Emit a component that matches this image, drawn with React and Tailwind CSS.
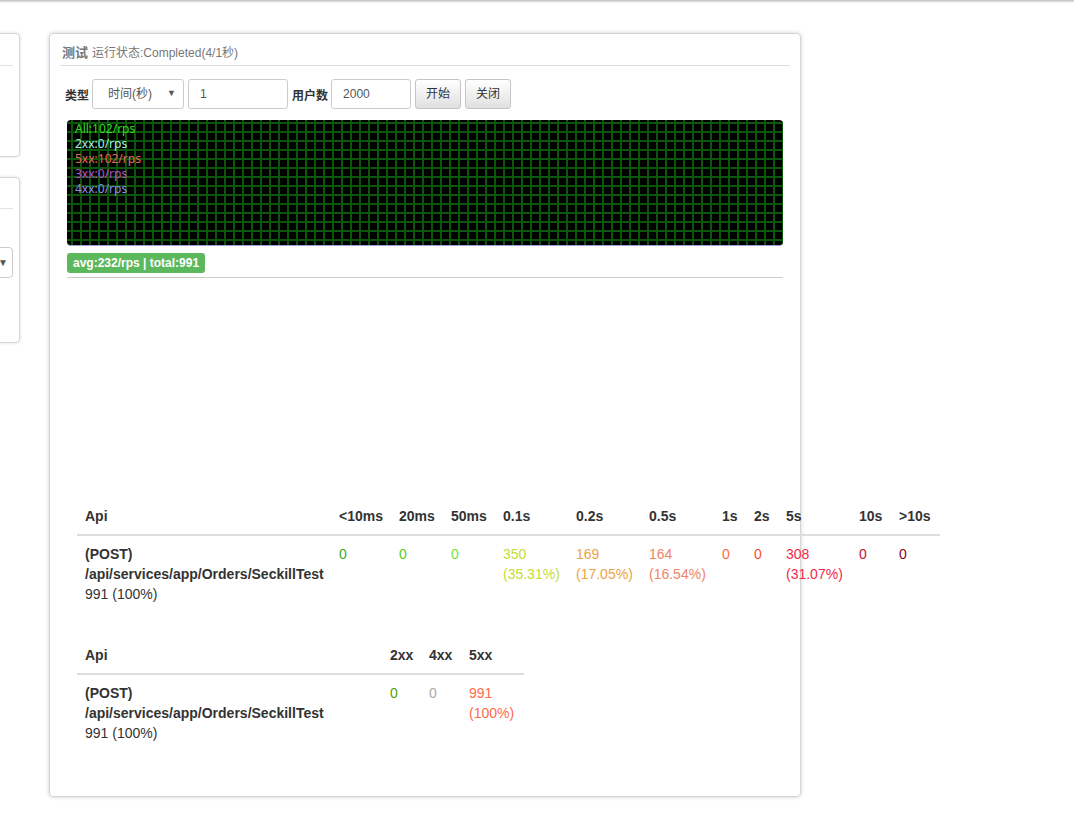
import React from "react";

const font = { fontFamily: '"Liberation Sans", Arial, "Noto Sans CJK SC", sans-serif' };
const chartFont = { fontFamily: '"Noto Sans", "Open Sans", sans-serif' };

const legend = [
  { label: "All:102/rps", color: "text-[#33dd22]" },
  { label: "2xx:0/rps", color: "text-[#a8eee0]" },
  { label: "5xx:102/rps", color: "text-[#e26a5a]" },
  { label: "3xx:0/rps", color: "text-[#b84cc8]" },
  { label: "4xx:0/rps", color: "text-[#8c8ce6]" },
];

const latencyCols = [
  { title: "<10ms", w: "w-[60px]", value: "0", color: "text-[#3aaa2a]" },
  { title: "20ms", w: "w-[52px]", value: "0", color: "text-[#55cc11]" },
  { title: "50ms", w: "w-[52px]", value: "0", color: "text-[#77e033]" },
  { title: "0.1s", w: "w-[73px]", value: "350", pct: "(35.31%)", color: "text-[#c6dc38]" },
  { title: "0.2s", w: "w-[73px]", value: "169", pct: "(17.05%)", color: "text-[#eca444]" },
  { title: "0.5s", w: "w-[73px]", value: "164", pct: "(16.54%)", color: "text-[#f08468]" },
  { title: "1s", w: "w-[32px]", value: "0", color: "text-[#ff6a3c]" },
  { title: "2s", w: "w-[32px]", value: "0", color: "text-[#ff4a30]" },
  { title: "5s", w: "w-[73px]", value: "308", pct: "(31.07%)", color: "text-[#f42848]" },
  { title: "10s", w: "w-[40px]", value: "0", color: "text-[#cc1030]" },
  { title: ">10s", w: "w-[49px]", value: "0", color: "text-[#880020]" },
];

const statusCols = [
  { title: "2xx", w: "w-[39px]", value: "0", color: "text-[#55a000]" },
  { title: "4xx", w: "w-[40px]", value: "0", color: "text-[#aaaaaa]" },
  { title: "5xx", w: "w-[63px]", value: "991", pct: "(100%)", color: "text-[#ff6a4a]" },
];

function ApiCell() {
  return (
    <td className="px-[8px] py-[8px] align-top leading-[20px] text-[#333]">
      <div className="font-bold">(POST)</div>
      <div className="font-bold">/api/services/app/Orders/SeckillTest</div>
      <div>991 (100%)</div>
    </td>
  );
}

function StatTable({ cols, apiW, className }) {
  return (
    <table className={"table-fixed border-collapse text-[14px] " + className}>
      <thead>
        <tr className="border-b-2 border-[#dddddd]">
          <th className={"px-[8px] py-[8px] text-left leading-[20px] font-bold text-[#333] " + apiW}>Api</th>
          {cols.map((c) => (
            <th key={c.title} className={"px-[8px] py-[8px] text-left leading-[20px] font-bold text-[#333] whitespace-nowrap " + c.w}>
              {c.title}
            </th>
          ))}
        </tr>
      </thead>
      <tbody>
        <tr>
          <ApiCell />
          {cols.map((c) => (
            <td key={c.title} className={"px-[8px] py-[8px] align-top leading-[20px] whitespace-nowrap " + c.color}>
              <div>{c.value}</div>
              {c.pct && <div>{c.pct}</div>}
            </td>
          ))}
        </tr>
      </tbody>
    </table>
  );
}

function Chart() {
  return (
    <div className="relative h-[126px] overflow-hidden rounded-[4px] border-b border-[#a999dd] bg-black">
      <svg className="absolute inset-0 h-full w-full">
        <defs>
          <pattern id="grid" width="9" height="9" patternUnits="userSpaceOnUse" x="4" y="2">
            <path d="M0 1H9M1 0V9" stroke="#0b560b" strokeWidth="2" fill="none" />
          </pattern>
        </defs>
        <rect width="100%" height="100%" fill="url(#grid)" />
      </svg>
      <div className="absolute left-[8px] top-[1px] text-[12px] leading-[15px]" style={chartFont}>
        {legend.map((l) => (
          <div key={l.label} className={l.color}>
            {l.label}
          </div>
        ))}
      </div>
    </div>
  );
}

export default function App() {
  return (
    <div className="min-h-[832px] bg-white text-[12px] text-[#333]" style={font}>
      <div className="h-[3px] bg-[linear-gradient(#bdbdbd,#ffffff)]" />
      <div className="flex pt-[30px]">
        {/* left column, mostly off screen */}
        <div className="flex w-[20px] shrink-0 flex-col gap-[20px]">
          <div className="ml-[-200px] h-[124px] w-[220px] rounded-[4px] border border-[#d6d6d6] shadow-[0_0_3px_rgba(0,0,0,0.15)]">
            <div className="mx-[6px] mt-[31px] border-b border-[#e2e2e2]" />
          </div>
          <div className="ml-[-200px] h-[166px] w-[220px] rounded-[4px] border border-[#d6d6d6] shadow-[0_0_3px_rgba(0,0,0,0.15)]">
            <div className="mx-[6px] mt-[30px] border-b border-[#e2e2e2]" />
            <div className="mr-[6px] mt-[38px] flex h-[31px] items-center justify-end rounded-[4px] border border-[#cccccc] pr-[4px] text-[10px] text-[#555]">
              ▼
            </div>
          </div>
        </div>

        {/* main panel */}
        <div className="ml-[29px] h-[764px] w-[752px] shrink-0 rounded-[4px] border border-[#d4d4d4] shadow-[0_0_4px_rgba(0,0,0,0.18)]">
          <div className="mx-[10px] flex h-[32px] items-end border-b border-[#dddddd] pb-[3px] pl-[2px]">
            <span className="text-[13px] font-bold text-[#777]">测试</span>
            <span className="ml-[4px] text-[12px] text-[#777]">运行状态:Completed(4/1秒)</span>
          </div>

          <div className="px-[17px]">
            <div className="mt-[13px] flex h-[30px] items-center">
              <span className="ml-[-2px] mr-[3px] mt-[4px] text-[12px] font-bold text-[#333]">类型</span>
              <div className="flex h-[30px] w-[92px] items-center justify-between rounded-[3px] border border-[#cccccc] pl-[15px] pr-[7px] text-[12px] text-[#555]">
                <span>时间(秒)</span>
                <span className="text-[9px]">▼</span>
              </div>
              <div className="ml-[4px] flex h-[30px] w-[100px] items-center rounded-[3px] border border-[#cccccc] px-[11px] text-[12px] text-[#555]">
                1
              </div>
              <span className="ml-[4px] mr-[3px] mt-[4px] text-[12px] font-bold text-[#333]">用户数</span>
              <div className="flex h-[30px] w-[80px] items-center rounded-[3px] border border-[#cccccc] px-[11px] text-[12px] text-[#555]">
                2000
              </div>
              <button className="ml-[4px] h-[30px] w-[46px] rounded-[3px] border border-[#c4c4c4] bg-[linear-gradient(#ffffff,#e0e0e0)] text-[12px] text-[#333]">
                开始
              </button>
              <button className="ml-[4px] h-[30px] w-[46px] rounded-[3px] border border-[#c4c4c4] bg-[linear-gradient(#ffffff,#e0e0e0)] text-[12px] text-[#333]">
                关闭
              </button>
            </div>

            <div className="mt-[11px]">
              <Chart />
            </div>

            <div className="mt-[7px] inline-flex h-[20px] items-center rounded-[3px] bg-[#5cb85c] px-[6px] text-[12px] font-bold text-white">
              avg:232/rps | total:991
            </div>
            <div className="mt-[4px] border-b border-[#cccccc]" />

            <div className="h-[220px]" />

            <StatTable cols={latencyCols} apiW="w-[254px]" className="ml-[10px] w-[863px]" />
            <StatTable cols={statusCols} apiW="w-[305px]" className="ml-[10px] mt-[25px] w-[447px]" />
          </div>
        </div>
      </div>
    </div>
  );
}
